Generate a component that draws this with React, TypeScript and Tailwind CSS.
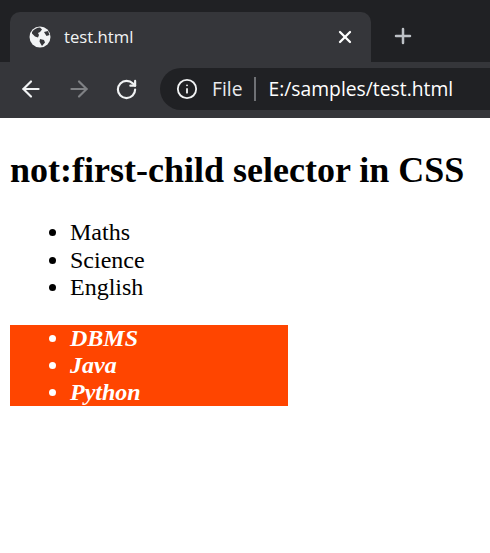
import { X, Plus, ArrowLeft, ArrowRight, RotateCw, Info } from "lucide-react";

function Globe() {
  return (
    <svg width="22" height="22" viewBox="0 0 22 22">
      <circle cx="11" cy="11" r="10.5" fill="#f1f3f4" />
      <path d="M3 6c2-3 5-4.500 8-4.500l2 2-2 2.500-2 1 1 2-1 2.500-3-1-3-3z" fill="#35363a" />
      <path d="M11 13l4 1 1 2.500-3 3.500-1.500-2.500-1-2z" fill="#35363a" />
      <path d="M15 6l4-1 1.500 4-3 1z" fill="#35363a" />
    </svg>
  );
}

export default function App() {
  return (
    <div className="min-h-[553px] bg-white font-['Liberation_Serif',serif] text-black">
      <div className="h-[118px] bg-[#35363a] font-['Open_Sans',sans-serif]">
        <div className="flex h-[62px] items-end bg-[#202124] pl-[10px]">
          <div className="flex h-[50px] w-[361px] items-center rounded-t-[10px] bg-[#35363a] pl-[19px] pr-[16px]">
            <Globe />
            <span className="ml-[13px] flex-1 text-[16.700px] text-[#f1f3f4]">test.html</span>
            <X size={20} strokeWidth={2.75} className="text-white" />
          </div>
          <div className="flex h-[50px] w-[64px] items-center justify-center pb-[2px]">
            <Plus size={24} strokeWidth={2.5} className="text-[#bdc1c6]" />
          </div>
        </div>
        <div className="flex h-[54px] items-center pl-[18px]">
          <ArrowLeft size={26} strokeWidth={2} className="text-[#f1f3f4]" />
          <ArrowRight size={26} strokeWidth={2} className="ml-[22px] text-[#7f8184]" />
          <RotateCw size={23} strokeWidth={2.25} className="ml-[23px] text-[#f1f3f4]" />
          <div className="ml-[22px] flex h-[42px] flex-1 items-center rounded-l-[21px] bg-[#202124] pl-[16px]">
            <Info size={22} strokeWidth={2} className="text-[#f1f3f4]" />
            <span className="ml-[14px] text-[19.300px] text-[#e8eaed]">File</span>
            <span className="ml-[11px] h-[24px] w-[2px] bg-[#6f7175]" />
            <span className="ml-[13px] text-[19.300px] text-white">E:/samples/test.html</span>
          </div>
        </div>
      </div>
      <div className="p-[10px]">
        <h1 className="mt-[22px] text-[36px] leading-[41px] font-bold">not:first-child selector in CSS</h1>
        <ul className="mt-[28px] list-disc pl-[60px] text-[24px] leading-[27.500px]">
          <li>Maths</li>
          <li>Science</li>
          <li>English</li>
        </ul>
        <ul className="mt-[23px] w-[278px] list-disc bg-[#ff4500] pl-[60px] text-[24px] leading-[27px] font-bold text-white italic">
          <li>DBMS</li>
          <li>Java</li>
          <li>Python</li>
        </ul>
      </div>
    </div>
  );
}
